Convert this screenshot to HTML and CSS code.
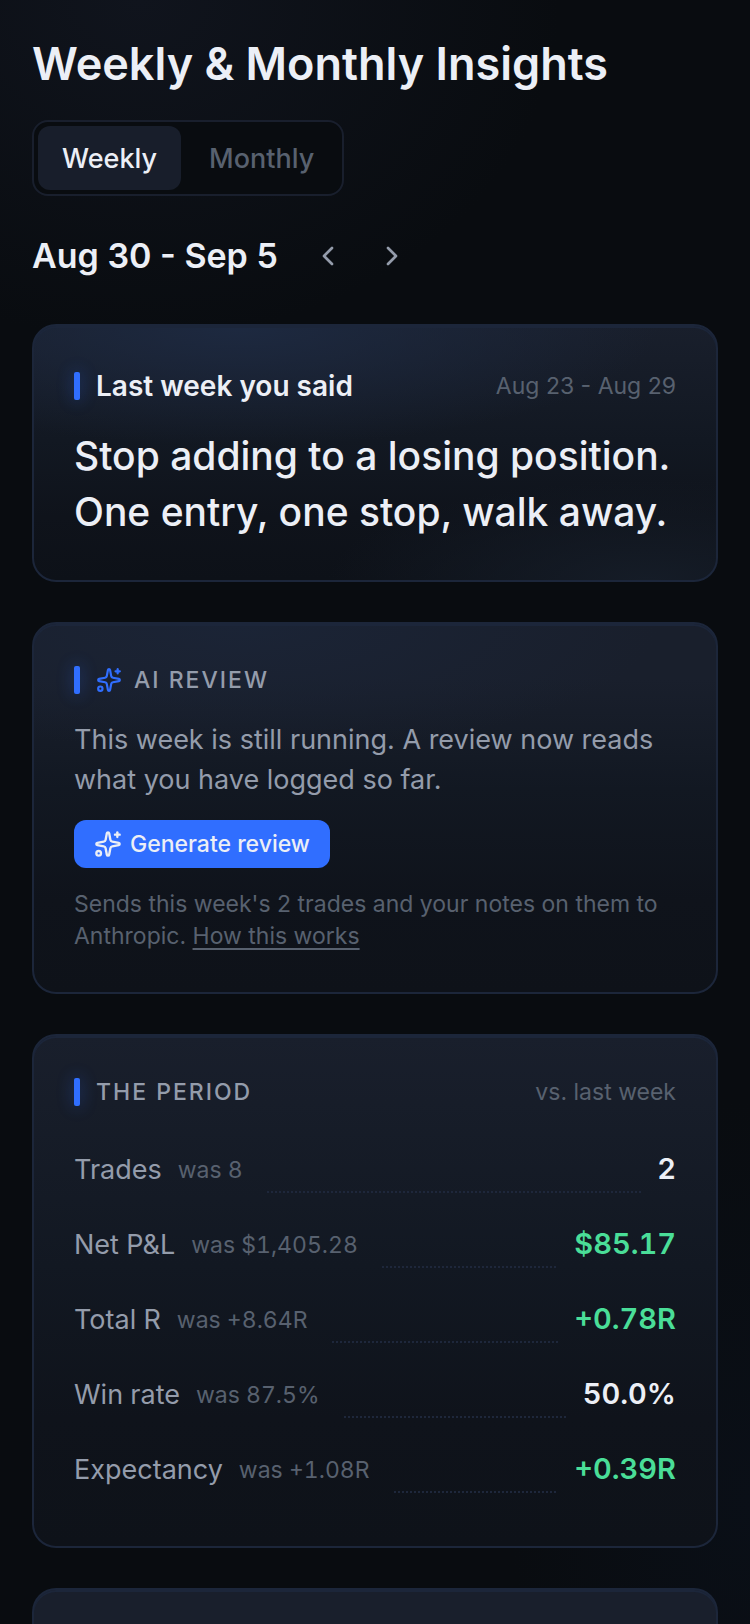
FILE: index.html
```html
<!DOCTYPE html>
<html lang="en">
<head>
<meta charset="utf-8">
<meta name="viewport" content="width=device-width, initial-scale=1">
<title>Weekly &amp; Monthly Insights</title>
<link rel="stylesheet" href="styles.css">
</head>
<body>
<svg class="defs" aria-hidden="true">
  <symbol id="sparkles" viewBox="0 0 24 24">
    <path d="M11.017 2.814a1 1 0 0 1 1.966 0l1.051 5.558a2 2 0 0 0 1.594 1.594l5.558 1.051a1 1 0 0 1 0 1.966l-5.558 1.051a2 2 0 0 0-1.594 1.594l-1.051 5.558a1 1 0 0 1-1.966 0l-1.051-5.558a2 2 0 0 0-1.594-1.594l-5.558-1.051a1 1 0 0 1 0-1.966l5.558-1.051a2 2 0 0 0 1.594-1.594z"/>
    <path d="M20 2v4"/><path d="M22 4h-4"/><circle cx="4" cy="20" r="2"/>
  </symbol>
</svg>
<main class="page">
  <h1 class="title">Weekly &amp; Monthly Insights</h1>
  <div class="tabs" role="tablist">
    <button class="tab tab-active" role="tab" aria-selected="true">Weekly</button>
    <button class="tab" role="tab" aria-selected="false">Monthly</button>
  </div>
  <div class="range">
    <h2 class="range-label">Aug 30 - Sep 5</h2>
    <div class="range-nav">
      <button class="nav-btn" aria-label="Previous week"><svg class="chevron" viewBox="0 0 24 24"><path d="m15 18-6-6 6-6"/></svg></button>
      <button class="nav-btn" aria-label="Next week"><svg class="chevron" viewBox="0 0 24 24"><path d="m9 18 6-6-6-6"/></svg></button>
    </div>
  </div>

  <section class="card card-quote">
    <header class="card-head card-head-tall">
      <span class="accent"></span>
      <h3 class="card-title">Last week you said</h3>
      <span class="aside">Aug 23 - Aug 29</span>
    </header>
    <p class="quote">Stop adding to a losing position. One entry, one stop, walk away.</p>
  </section>

  <section class="card card-review">
    <header class="card-head">
      <span class="accent"></span>
      <svg class="icon icon-blue" aria-hidden="true"><use href="#sparkles"/></svg>
      <h3 class="eyebrow">AI REVIEW</h3>
    </header>
    <p class="body">This week is still running. A review now reads what you have logged so far.</p>
    <button class="primary"><svg class="icon" aria-hidden="true"><use href="#sparkles"/></svg>Generate review</button>
    <p class="note">Sends this week's 2 trades and your notes on them to Anthropic. <a class="link" href="#">How this works</a></p>
  </section>

  <section class="card card-period">
    <header class="card-head">
      <span class="accent"></span>
      <h3 class="eyebrow">THE PERIOD</h3>
      <span class="aside">vs. last week</span>
    </header>
    <dl class="stats">
      <div class="stat"><dt class="name">Trades<span class="was">was 8</span></dt><dd class="value">2</dd></div>
      <div class="stat"><dt class="name">Net P&amp;L<span class="was">was $1,405.28</span></dt><dd class="value gain">$85.17</dd></div>
      <div class="stat"><dt class="name">Total R<span class="was">was +8.64R</span></dt><dd class="value gain">+0.78R</dd></div>
      <div class="stat"><dt class="name">Win rate<span class="was">was 87.5%</span></dt><dd class="value">50.0%</dd></div>
      <div class="stat"><dt class="name">Expectancy<span class="was">was +1.08R</span></dt><dd class="value gain">+0.39R</dd></div>
    </dl>
  </section>

  <section class="card card-next"></section>
</main>
</body>
</html>
```
FILE: styles.css
```css
*, *::before { box-sizing: border-box; }
body, h1, h2, h3, p, dl, dd { margin: 0; }
body {
  background:
    radial-gradient(420px 340px at 140px 0, #10141d, transparent),
    radial-gradient(240px 400px at 100% 1500px, #0a0f17, transparent),
    #090c10;
  color: #eceff6;
  font-family: Inter, "Liberation Sans", sans-serif;
}
button { margin: 0; border: 0; background: none; color: inherit; font: inherit; padding: 0; }
.defs { display: none; }
.page {
  display: flex;
  flex-direction: column;
  min-height: 100vh;
  padding: 32px 32px 0;
}
.title { font-size: 45px; line-height: 64px; font-weight: 600; }
.tabs {
  display: flex;
  gap: 4px;
  align-self: flex-start;
  margin-top: 24px;
  padding: 4px;
  border: 2px solid #191f2d;
  border-radius: 16px;
  background: #090c10;
}
.tab {
  height: 64px;
  padding: 0 24px;
  border-radius: 12px;
  font-size: 27px;
  font-weight: 500;
  color: #58616f;
}
.tab-active { background: #181e2b; color: #eceff6; }
.range { display: flex; align-items: center; gap: 18px; height: 64px; margin: 28px 0 36px; }
.range-label { font-size: 34px; line-height: 48px; font-weight: 600; }
.range-nav { display: flex; }
.nav-btn { display: flex; align-items: center; justify-content: center; width: 64px; height: 64px; color: #949cab; }
.chevron { width: 32px; height: 32px; fill: none; stroke: currentColor; stroke-width: 2; stroke-linecap: round; stroke-linejoin: round; }

.card {
  margin-bottom: 40px;
  padding: 40px;
  border: 2px solid #1c263a;
  border-radius: 24px;
  background: linear-gradient(#191f2c, #121822 45%, #0f131b 75%, #0e1219);
  box-shadow: inset 0 2px #1c263a;
}
.card-quote {
  background:
    radial-gradient(420px 120px at 30% 0, #1d2940, transparent),
    radial-gradient(320px 100px at 90% 100%, #151c27, transparent),
    linear-gradient(#191f2c, #121822 45%, #0f131b 75%, #0d1118);
}
.card-review {
  background:
    radial-gradient(420px 130px at 30% 0, #1b2436, transparent),
    linear-gradient(#191f2c 15%, #121822 45%, #0f131b 75%, #0e1219);
}
.card-head { display: flex; align-items: center; height: 32px; }
.card-head-tall { height: 40px; }
.accent { width: 6px; height: 28px; margin-right: 16px; border-radius: 2px; background: #306eff; box-shadow: 0 0 16px 2px #306eff38; }
.card-title { font-size: 28px; line-height: 40px; font-weight: 600; }
.eyebrow { font-size: 23px; line-height: 32px; font-weight: 500; letter-spacing: 2px; color: #949cab; }
.aside { margin-left: auto; font-size: 23px; line-height: 32px; color: #58616f; }
.quote { margin-top: 22px; font-size: 39px; line-height: 56px; font-weight: 500; }

.icon { flex: none; width: 28px; height: 28px; fill: none; stroke: currentColor; stroke-width: 2; stroke-linecap: round; stroke-linejoin: round; }
.icon-blue { width: 26px; height: 26px; margin-right: 12px; color: #306eff; }
.body { margin-top: 24px; font-size: 27px; line-height: 40px; color: #949cab; }
.primary {
  display: flex;
  align-items: center;
  gap: 8px;
  height: 48px;
  margin-top: 20px;
  padding: 0 20px;
  border-radius: 12px;
  background: #306eff;
  font-size: 23px;
  font-weight: 500;
}
.note { margin-top: 20px; font-size: 23px; line-height: 32px; color: #58616f; }
.link { color: inherit; text-decoration-thickness: 2px; text-underline-offset: 4px; }

.stats { display: grid; gap: 14px; margin-top: 37px; font-variant-numeric: tabular-nums; }
.stat { display: flex; align-items: baseline; height: 61px; }
.name { display: flex; flex: 1; align-items: center; font-size: 27px; line-height: 48px; color: #949cab; white-space: nowrap; }
.was { margin-left: 16px; font-size: 23px; color: #58616f; }
.name::after {
  content: "";
  flex: 1;
  height: 2px;
  margin: 44px 16px 0 24px;
  background: repeating-linear-gradient(90deg, #1e273b 0 2px, transparent 2px 4px);
}
.value { font-size: 29px; line-height: 48px; font-weight: 600; }
.gain { color: #4ade98; }
.card-next { flex: 1 0 36px; margin-bottom: 0; padding: 0; border-bottom: 0; border-radius: 24px 24px 0 0; background: #191f2c; }
```
